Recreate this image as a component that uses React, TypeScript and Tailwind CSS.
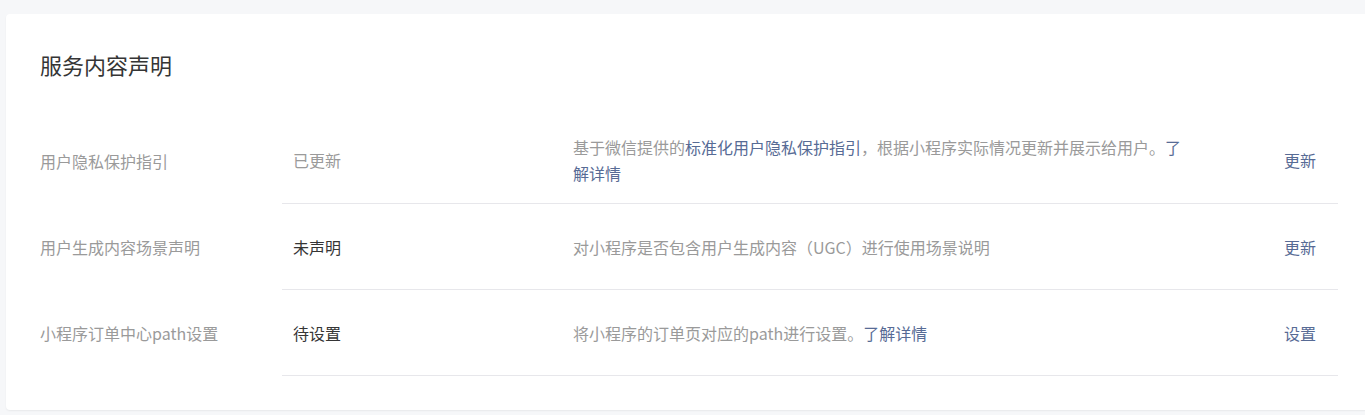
import React from "react";

const LINK = "text-[#576b95]";

type Row = {
  label: string;
  status: string;
  statusDark: boolean;
  desc: React.ReactNode;
  action: string;
};

const rows: Row[] = [
  {
    label: "用户隐私保护指引",
    status: "已更新",
    statusDark: false,
    desc: (
      <>
        基于微信提供的<span className={LINK}>标准化用户隐私保护指引</span>，根据小程序实际情况更新并展示给用户。
        <span className={LINK}>了解详情</span>
      </>
    ),
    action: "更新",
  },
  {
    label: "用户生成内容场景声明",
    status: "未声明",
    statusDark: true,
    desc: <>对小程序是否包含用户生成内容（UGC）进行使用场景说明</>,
    action: "更新",
  },
  {
    label: "小程序订单中心path设置",
    status: "待设置",
    statusDark: true,
    desc: (
      <>
        将小程序的订单页对应的path进行设置。<span className={LINK}>了解详情</span>
      </>
    ),
    action: "设置",
  },
];

export default function App() {
  return (
    <div className="h-[415px] w-full overflow-hidden bg-[#f6f7f9] pl-[6px] pt-[14px] font-['Noto_Sans_CJK_SC',sans-serif]">
      <div className="w-[1380px] rounded-[4px] bg-white pb-[34px] pl-[34px] pt-[35px] shadow-[0_1px_2px_rgba(0,0,0,0.06)]">
        <h1 className="mb-[38px] text-[22px] leading-[30px] font-normal text-[#353535]">
          服务内容声明
        </h1>
        <div className="flex flex-col">
          {rows.map((r, i) => (
            <div key={i} className="flex items-stretch">
              <div className="flex w-[242px] shrink-0 items-center text-[16px] leading-[26px] text-[#9a9a9a]">
                {r.label}
              </div>
              <div className="flex min-h-[86px] w-[1056px] items-center border-b border-[#e7e7eb] py-[17px] text-[16px] leading-[26px]">
                <div
                  className={`w-[291px] shrink-0 pl-[11px] ${
                    r.statusDark ? "text-[#353535]" : "text-[#9a9a9a]"
                  }`}
                >
                  {r.status}
                </div>
                <div className="w-[711px] shrink-0">
                  <div className="w-[614px] text-[#9a9a9a]">{r.desc}</div>
                </div>
                <div className={`shrink-0 ${LINK}`}>{r.action}</div>
              </div>
            </div>
          ))}
        </div>
      </div>
    </div>
  );
}
